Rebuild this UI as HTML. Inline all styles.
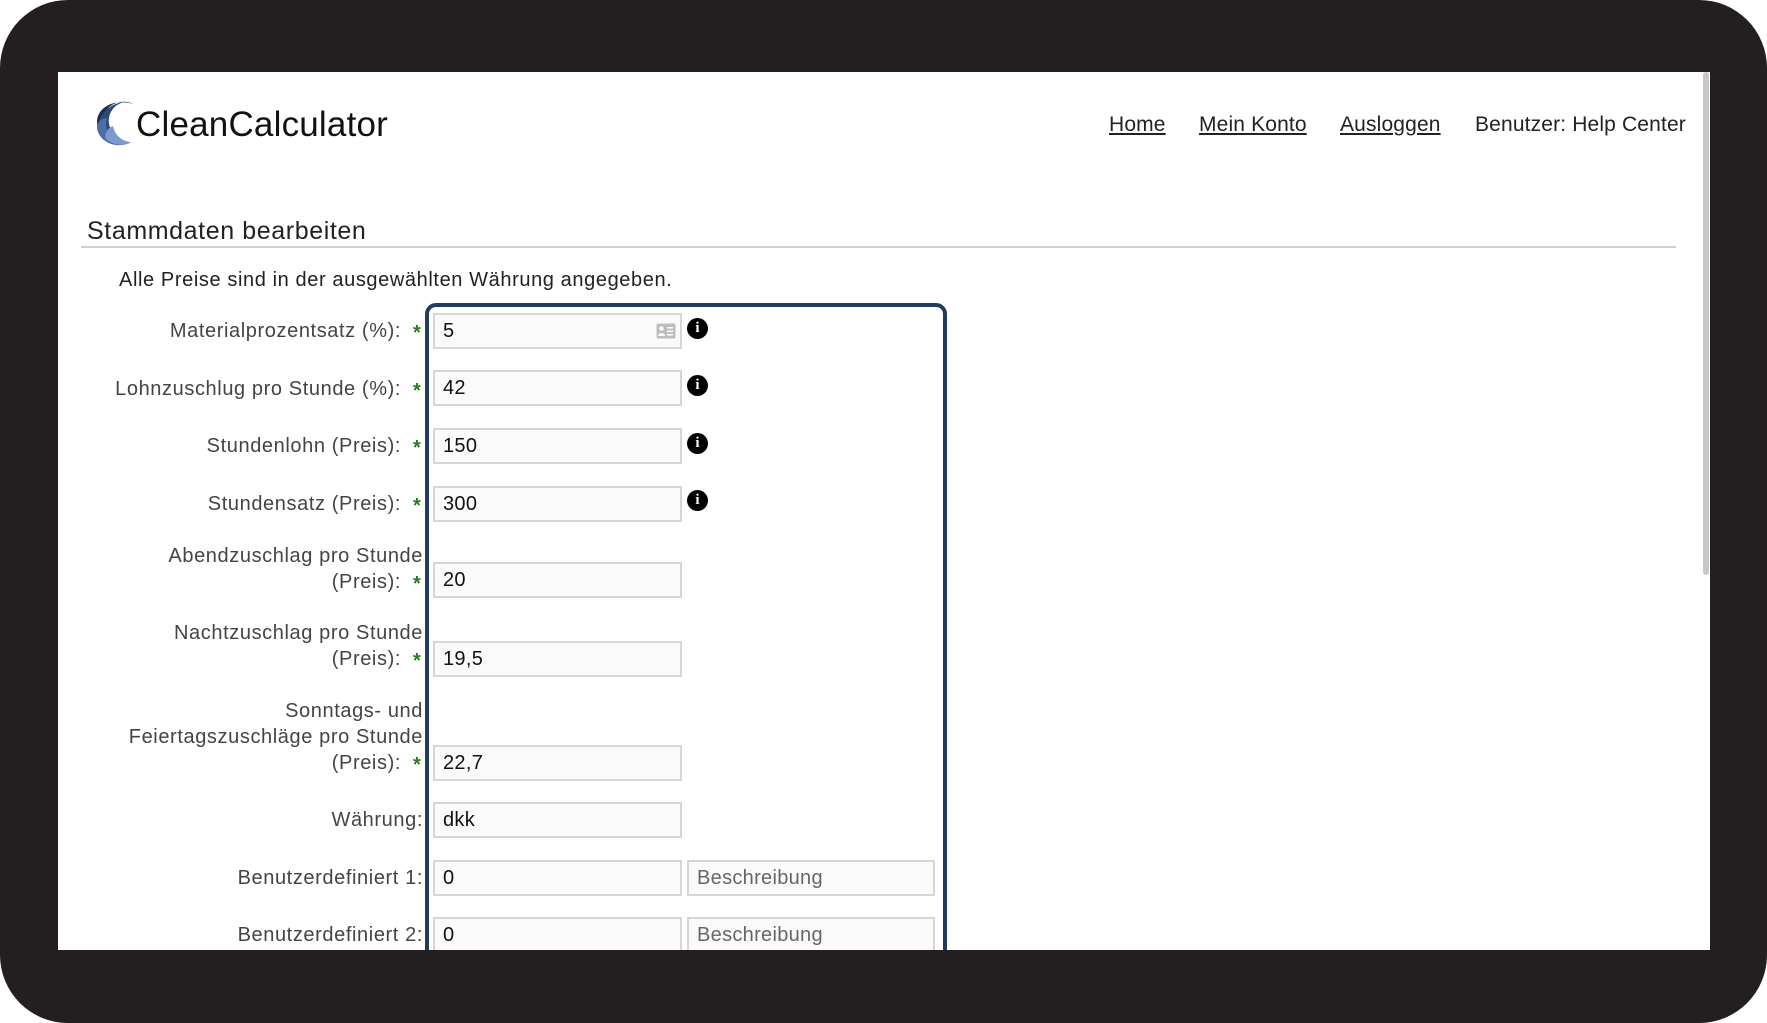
<!DOCTYPE html>
<html><head><meta charset="utf-8"><style>
*{margin:0;padding:0;box-sizing:border-box}
body{width:1767px;height:1023px;background:#fff;position:relative;overflow:hidden;font-family:"Liberation Sans",sans-serif}
.frame{position:absolute;left:0;top:0;width:1767px;height:1023px;border-radius:68px;background:#231f20}
.wrap{position:absolute;left:0;top:0;width:1767px;height:950px;overflow:hidden}
.t{position:absolute;white-space:nowrap;line-height:26px}
.nav{position:absolute;top:112px;font-size:21px;color:#222;text-decoration:underline;line-height:26px;letter-spacing:0.15px}
.lab{position:absolute;right:1344px;font-size:20px;color:#444;text-align:right;line-height:26px;white-space:nowrap;letter-spacing:0.6px}
.star{position:absolute;left:413px;color:#2b7a1f;font-size:20px;line-height:26px;font-weight:bold}
.inp{position:absolute;left:433px;width:249px;height:36px;background:#fafafa;border:2px solid #d6d6d6;font-size:20px;color:#111;padding-left:8px;line-height:32px;letter-spacing:0.3px}
.inp2{left:687px;width:248px;color:#666}
.info{position:absolute;left:687px;width:21px;height:21px;border-radius:50%;background:#000;color:#fff;font:bold 15px "Liberation Serif",serif;text-align:center;line-height:21px}
</style></head><body>
<div class="frame"></div>
<div class="wrap">
<div style="position:absolute;left:58px;top:72px;width:1652px;height:878px;background:#fff"></div>
<div style="position:absolute;left:1703px;top:72px;width:6px;height:503px;background:#c8c8c8;border-radius:3px"></div>

<svg style="position:absolute;left:93px;top:96px" width="48" height="52" viewBox="0 0 48 52">
<path d="M40 8 C28 2 12 8 10 24 C9 36 16 44 24 48 C14 46 4 38 4 26 C4 12 20 2 40 8Z" fill="#1e2f4d"/>
<path d="M38 6 C26 4 14 14 16 28 C18 38 26 44 36 46 C24 50 8 44 6 32 C4 18 20 4 38 6Z" fill="#2c4a78"/>
<path d="M14 22 C10 34 18 46 34 48 C22 52 6 46 4 32 C4 26 8 22 14 22Z" fill="#4b6ea8"/>
<path d="M20 30 C22 40 30 46 38 46 C34 50 22 50 14 44 C10 40 14 32 20 30Z" fill="#7d9ad0"/>
</svg>
<div class="t" style="left:136px;top:105px;font-size:35px;line-height:40px;color:#111;letter-spacing:0.2px">CleanCalculator</div>

<div class="nav" style="left:1109px">Home</div>
<div class="nav" style="left:1199px">Mein Konto</div>
<div class="nav" style="left:1340px">Ausloggen</div>
<div class="nav" style="left:1475px;text-decoration:none">Benutzer: Help Center</div>

<div class="t" style="left:87px;top:216px;font-size:25px;line-height:30px;color:#222;letter-spacing:0.6px">Stammdaten bearbeiten</div>
<div style="position:absolute;left:81px;top:246px;width:1595px;height:2px;background:#d0d0d0"></div>
<div class="t" style="left:119px;top:267px;font-size:20px;color:#222;letter-spacing:0.6px">Alle Preise sind in der ausgewählten Währung angegeben.</div>

<div style="position:absolute;left:425px;top:303px;width:522px;height:680px;border:4px solid #233c5e;border-radius:11px"></div>

<div class="lab" style="top:318px;right:1366px">Materialprozentsatz (%):</div><div class="star" style="top:320px">*</div>
<div class="inp" style="top:313px">5</div>
<svg style="position:absolute;left:656px;top:323px" width="20" height="16" viewBox="0 0 20 16"><rect x="0.5" y="0.5" width="19" height="15" rx="2" fill="#bdbdbd"/><circle cx="5.5" cy="5.5" r="2.3" fill="#fafafa"/><path d="M2 13 C2 9 9 9 9 13Z" fill="#fafafa"/><rect x="11" y="4" width="6" height="1.6" fill="#fafafa"/><rect x="11" y="7.5" width="6" height="1.6" fill="#fafafa"/><rect x="11" y="11" width="6" height="1.6" fill="#fafafa"/></svg>
<div class="info" style="top:318px">i</div>

<div class="lab" style="top:376px;right:1366px">Lohnzuschlug pro Stunde (%):</div><div class="star" style="top:378px">*</div>
<div class="inp" style="top:370px">42</div><div class="info" style="top:375px">i</div>

<div class="lab" style="top:433px;right:1366px">Stundenlohn (Preis):</div><div class="star" style="top:435px">*</div>
<div class="inp" style="top:428px">150</div><div class="info" style="top:433px">i</div>

<div class="lab" style="top:491px;right:1366px">Stundensatz (Preis):</div><div class="star" style="top:493px">*</div>
<div class="inp" style="top:486px">300</div><div class="info" style="top:490px">i</div>

<div class="lab" style="top:543px">Abendzuschlag pro Stunde</div>
<div class="lab" style="top:569px;right:1366px">(Preis):</div><div class="star" style="top:571px">*</div>
<div class="inp" style="top:562px">20</div>

<div class="lab" style="top:620px">Nachtzuschlag pro Stunde</div>
<div class="lab" style="top:646px;right:1366px">(Preis):</div><div class="star" style="top:648px">*</div>
<div class="inp" style="top:641px">19,5</div>

<div class="lab" style="top:698px">Sonntags- und</div>
<div class="lab" style="top:724px">Feiertagszuschläge pro Stunde</div>
<div class="lab" style="top:750px;right:1366px">(Preis):</div><div class="star" style="top:752px">*</div>
<div class="inp" style="top:745px">22,7</div>

<div class="lab" style="top:807px">Währung:</div>
<div class="inp" style="top:802px">dkk</div>

<div class="lab" style="top:865px">Benutzerdefiniert 1:</div>
<div class="inp" style="top:860px">0</div><div class="inp inp2" style="top:860px">Beschreibung</div>

<div class="lab" style="top:922px">Benutzerdefiniert 2:</div>
<div class="inp" style="top:917px">0</div><div class="inp inp2" style="top:917px">Beschreibung</div>
</div>
</body></html>
